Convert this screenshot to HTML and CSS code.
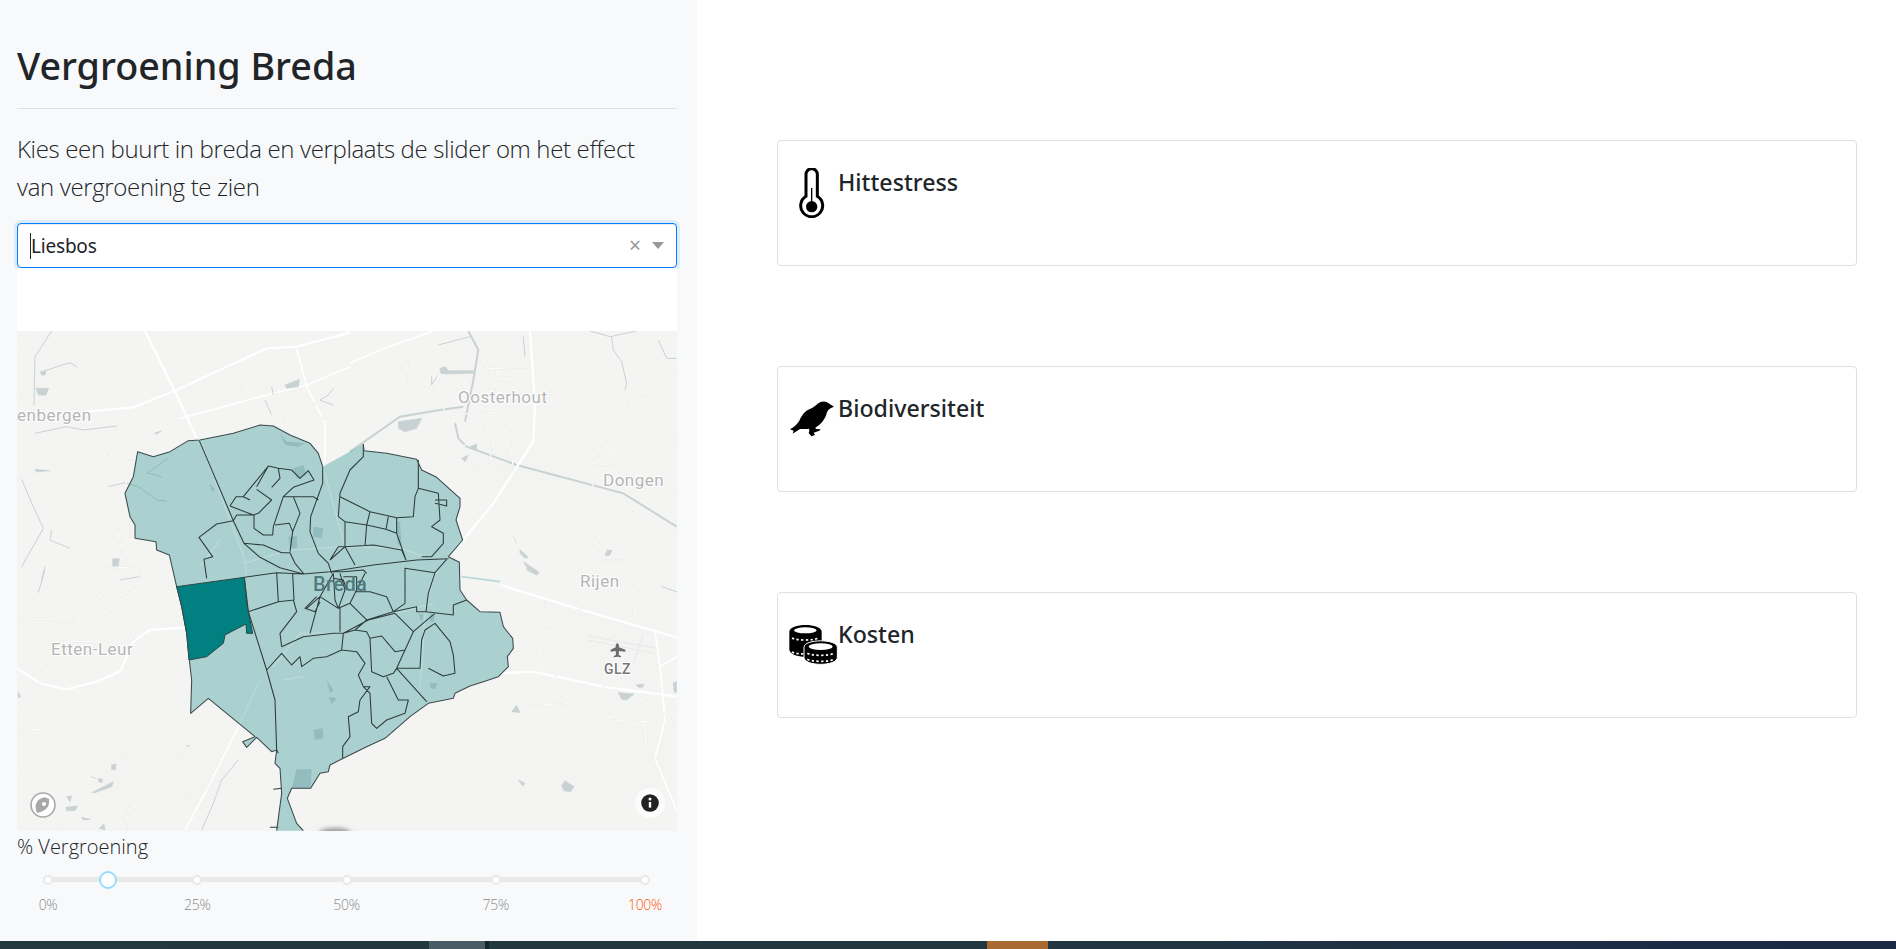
FILE: index.html

```html
<!DOCTYPE html>
<html lang="nl">
<head>
    <meta charset="UTF-8">
    <meta name="viewport" content="width=device-width, initial-scale=1.0">
    <title>Vergroening Breda</title>
    <link rel="stylesheet" href="styles.css">
</head>
<body>
    <div class="page">
        <aside class="sidebar">
            <h1>Vergroening Breda</h1>
            <hr class="divider">
            <p class="lead">Kies een buurt in breda en verplaats de slider om het effect van vergroening te zien</p>

            <div class="dropdown">
                <span class="caret"></span>
                <span class="dropdown-value">Liesbos</span>
                <span class="dropdown-clear">×</span>
                <span class="dropdown-arrow"></span>
            </div>
            <div class="map-top"></div>

            <svg class="map" viewBox="17 331 660 500" aria-label="Kaart van Breda">
                <defs>
                    <filter id="wobble" x="-5%" y="-5%" width="110%" height="110%">
                        <feTurbulence type="fractalNoise" baseFrequency="0.09" numOctaves="2" seed="4"/>
                        <feDisplacementMap in="SourceGraphic" scale="3"/>
                    </filter>
                </defs>
                <rect x="17" y="331" width="660" height="500" fill="#f4f4f3"/>

                <!-- land shading -->
                <g class="shade">
                    <ellipse cx="160" cy="770" rx="70" ry="45"/>
                    <ellipse cx="500" cy="770" rx="110" ry="40"/>
                    <ellipse cx="600" cy="760" rx="70" ry="40"/>
                    <ellipse cx="520" cy="470" rx="50" ry="20"/>
                </g>

                <!-- north west -->
                <g transform="translate(0 320) scale(.33333)">
                    <path class="road" d="M435,33 L525,215 L590,355"/>
                    <path class="road" d="M260,275 L400,262 L530,210 L800,85 L890,80 L1050,38"/>
                    <path class="road-mid" d="M540,295 L800,225 L920,195 L1050,140"/>
                    <path class="road-mid" d="M890,85 L920,200 L975,310 L975,430"/>
                    <path class="minor" d="M480,40 L490,100 L590,240 L690,195 L810,205 M52,100 L100,60 L120,33 M52,225 L90,240 L110,310 L200,400 L355,605 L365,720 L370,780"/>
                    <path class="minor" d="M200,485 L250,470 L290,410 L415,392 M185,490 L190,530 L255,575 L355,605 M52,480 L120,450 L175,460 M375,420 L405,420 M355,610 L390,605 L390,655 L405,655 M315,745 L420,740 L420,780 M905,255 L960,250 L970,300 M830,150 L815,180 L850,290 L855,315"/>
                    <path class="water" d="M155,33 L105,110 L102,255 M125,155 L210,128 L232,142 M325,500 L375,488 M440,460 L505,415 M445,460 L470,465 L485,472 M380,490 L415,500 L470,540 L500,543 M65,478 L100,560 L130,625 L65,740 M155,630 L150,660 L210,685 M135,740 L125,780 M105,340 L200,320 L250,330 L350,318 M815,200 L820,225 M795,240 L815,285 M1000,205 L985,225 L960,240 L1000,255"/>
                    <path class="pond" d="M108,205 L146,205 L138,225 L115,225 Z M338,716 L358,716 L355,738 L338,738 Z M855,195 L898,178 L896,200 L860,205 Z M122,155 L138,155 L135,165 L124,165 Z M105,448 L150,452 L110,456 Z M463,340 L485,332 L470,342 Z"/>
                    <rect class="minor" x="845" y="300" width="14" height="14" transform="rotate(10 852 307)"/>
                </g>

                <!-- north east -->
                <g transform="translate(350 320) scale(.33333)">
                    <path class="water-wide" d="M0,395 L150,290 L270,270 L340,260"/>
                    <path class="water-wide" d="M355,33 L385,90 L370,180 L345,305 M315,310 L325,355 L350,380 L500,435 L820,520 L980,620"/>
                    <path class="road" d="M295,705 L340,660 L430,550 L550,365 L555,250 L540,33"/>
                    <path class="road-mid" d="M0,130 L90,90 L250,33"/>
                    <path class="minor" d="M220,55 L260,110 L275,210 L285,295 L380,320 L470,335 L550,355 M220,55 L175,110 L170,185 L275,210 M285,295 L380,275 L475,280 L480,335 M380,320 L300,450 M415,145 L540,148 M405,100 L400,175 L380,275 M440,150 L430,275 M500,150 L480,260 M430,175 L490,175 M380,320 L425,340 L420,440 L375,500 M305,455 L360,430 L410,465 M420,435 L490,455 M480,340 L490,455 M305,455 L430,545 M590,260 L590,305 L650,300 L720,265 L870,240 L980,160 M590,305 L720,430 L850,440 L980,520 M760,380 L830,395 L750,380 L740,470 L710,540 L750,640 L740,720 L830,720 L830,780 M810,255 L830,390 M870,180 L980,165 M870,180 L880,260 L960,360 L980,360 M830,390 L870,340 L960,420 M840,420 L930,335 M490,455 L575,590 L650,770 M420,590 L470,660 L575,590 M430,770 L470,660 M710,540 L900,590 L980,640 M0,60 L70,70 L90,90"/>
                    <path class="water" d="M720,33 L780,50 L860,33 M785,50 L790,90 L815,125 L830,190 L825,210 M925,60 L950,115 L980,115 M265,75 L360,50 M520,50 L525,110 M245,170 L245,195 L260,170"/>
                    <path class="pond" d="M270,145 L285,140 L295,152 L370,152 L370,160 L285,162 L272,160 Z M145,305 L215,295 L200,325 L165,335 L145,325 Z M490,650 L500,670 M510,690 L535,712 L525,715 L510,700 Z M530,745 L568,760 L560,765 L530,750 Z M770,690 L785,692 L775,705 Z M335,415 L355,405 L345,425 Z M360,380 L380,372 L380,390 Z"/>
                </g>

                <!-- south west -->
                <g transform="translate(0 570) scale(.33333)">
                    <path class="road" d="M52,295 L120,340 L200,358 L290,335 L360,305 L400,215 L450,180 L560,172"/>
                    <path class="road-mid" d="M555,780 L620,660 L720,460 L780,330"/>
                    <path class="minor" d="M52,150 L105,158 L230,155 L300,72 L330,100 L360,70 L480,55 L530,72 M105,158 L125,320 L100,395 L70,415 L88,480 L175,468 L270,410 L305,365 L360,310 M360,310 L480,425 L560,590 L620,650 L700,730 L730,780 M305,365 L340,480 L385,585 L375,640 L385,715 L380,780 M385,715 L510,700 L580,685 L620,650 M230,155 L410,185 L360,70 M300,72 L330,190 M260,165 L280,215 M165,165 L190,215 M120,255 L200,215 L280,215 L410,185 M230,155 L360,110 L525,72 M52,605 L80,590 L110,630 L115,680 L185,780 M52,490 L175,468"/>
                    <path class="water" d="M135,0 L115,68 M360,30 L418,20 M715,570 L665,630 L640,700 L605,780"/>
                    <path class="pond" d="M55,365 L62,382 L54,382 Z M335,585 L348,582 L346,600 L335,598 Z M272,620 L290,625 M295,625 L308,628 L305,638 L297,636 Z M275,668 L340,635 L335,650 L285,668 Z M200,680 L215,678 L210,695 Z M198,712 L233,708 L225,722 L200,722 Z M245,742 L272,748 L250,750 Z M298,775 L312,762 L315,780 Z M560,528 L585,525 L565,532 Z"/>
                    <path class="shade" d="M555,540 L600,500 L640,520 L610,595 L570,580 Z M270,135 L300,125 L300,155 L275,155 Z"/>
                </g>

                <!-- south east -->
                <g transform="translate(500 550) scale(.33333)">
                    <path class="shade" d="M175,225 L215,185 L340,205 L470,250 L475,385 L400,400 L300,360 L240,300 Z"/>
                    <path class="road" d="M0,105 L240,178 L530,262"/>
                    <path class="road" d="M0,370 L100,365 L310,410 L530,440"/>
                    <path class="road-mid" d="M465,245 L480,350 L490,450 L495,510 L465,625 L530,780 M480,350 L530,320"/>
                    <path class="runway" d="M265,258 L470,295 M265,270 L460,310 M430,250 L400,340"/>
                    <path class="minor" d="M165,0 L245,175 M135,150 L135,180 L100,240 L120,310 L175,390 L195,462 M100,240 L165,236 L210,185 L245,178 M30,300 L120,310 L260,335 L305,385 L315,420 L330,510 L290,525 L30,755 L0,815 M0,425 L100,465 L195,462 L320,440 M330,510 L440,515 L490,490 L530,480 M420,440 L430,510 L440,520 L440,600 L465,625 M510,480 L515,525 L530,525 M250,40 L285,30 L295,0 M285,125 L400,150 L395,100 L365,0 M320,135 L340,205 M400,150 L400,218 M280,100 L285,125 M250,40 L250,80"/>
                    <path class="water" d="M485,110 L530,125"/>
                    <path class="pond" d="M60,0 L82,20 L72,22 Z M70,35 L115,65 L105,72 L80,52 Z M315,10 L335,0 L330,15 L318,18 Z M55,690 L75,700 L68,708 Z M185,708 L195,692 L222,710 L212,725 L192,722 Z M355,428 L402,432 L380,450 L365,448 Z M408,405 L432,402 L428,412 L415,412 Z M520,398 L530,395 L530,428 L522,425 Z M35,485 L50,465 L60,488 Z"/>
                    <path class="plane" d="M352,280 C356,280 357,286 357,292 L376,299 L376,305 L357,303 L356,314 L363,319 L363,322 L352,320 L341,322 L341,319 L348,314 L347,303 L332,305 L332,299 L347,292 C347,286 348,280 352,280 Z"/>
                </g>

                <g class="labels">
                    <text class="map-label" x="458" y="403">Oosterhout</text>
                    <text class="map-label" x="17" y="421">enbergen</text>
                    <text class="map-label" x="603" y="486">Dongen</text>
                    <text class="map-label" x="580" y="587">Rijen</text>
                    <text class="map-label" x="51" y="655">Etten-Leur</text>
                    <text class="map-label map-label-dark" x="604" y="674">GLZ</text>
                </g>

                <!-- Breda wijken -->
                <g transform="translate(100 400) scale(.33333)">
                    <path class="city" d="M300,120 L400,100 L480,75 L520,78 L570,105 L630,130 L655,160 L668,200 L790,132 L792,152 L860,160 L950,178 L965,210 L1010,232 L1080,295 L1080,320 L1068,360 L1088,420 L1045,470 L1078,487 L1080,570 L1100,600 L1140,635 L1200,637 L1210,680 L1238,715 L1240,745 L1222,770 L1225,800 L1195,830 L1150,845 L1110,858 L1065,880 L1060,895 L985,910 L930,950 L855,1015 L800,1040 L730,1075 L690,1095 L685,1115 L660,1120 L632,1165 L575,1165 L562,1195 L590,1270 L610,1292 L530,1292 L545,1180 L540,1105 L525,1090 L530,1050 L515,1055 L470,1012 L440,1042 L428,1025 L465,1010 L325,895 L272,940 L275,840 L268,780 L260,700 L245,620 L230,560 L208,465 L170,450 L168,425 L105,415 L105,375 L90,350 L75,280 L100,230 L113,155 L160,170 L210,155 L265,122 Z"/>
                    <path class="city-detail" d="M300,120 L435,480 L440,530 M670,205 L735,440 M1045,470 L1000,530 L975,640 L965,800 L960,860 M520,800 L600,700 L730,700 M885,640 L1000,610 M430,490 L570,450 L735,440 L900,445 L975,470 M1085,530 L1200,545 M550,840 L610,830 M300,500 L360,420"/>
                    <path class="city-pond" d="M580,205 L610,195 L620,225 L590,235 Z M565,410 L590,408 L592,445 L570,445 Z M890,365 L900,365 L905,440 L892,430 Z M640,990 L668,985 L670,1015 L645,1020 Z M590,1108 L635,1108 L632,1165 L575,1165 Z M990,850 L1012,850 L1005,868 L992,865 Z M685,890 L710,895 L695,912 Z M680,840 L700,870 L690,880 Z M955,640 L970,645 L965,665 Z M990,640 L1005,645 L1000,665 L990,665 Z M330,250 L345,270 L335,275 Z M640,380 L670,385 L665,415 L640,410 Z M540,100 L560,125 L615,130 L595,140 L555,135 Z"/>

                    <path class="bounds" d="M298,122 L400,362 L432,430 L480,472 L540,503 L610,522 L690,515 L820,495 L950,480 L1045,476
                        M433,532 L530,518 L610,522
                        M433,532 L445,635 L500,810 L525,900 L530,1050 L535,1060
                        M668,200 L668,250 L632,350 L630,395 L655,460 L685,490 L695,520
                        M400,362 L350,372 L297,412 L338,470 L312,478 L320,535
                        M432,430 L490,435 L545,458 L570,458 L585,490 L612,522
                        M390,318 L408,290 L430,290 L505,198 L535,205 L575,210 L600,235 L625,212 L642,240 L580,262 L550,290 L640,290 L655,300
                        M470,268 L515,300 L475,340 L460,345 L390,318
                        M430,290 L450,300 M550,290 L520,380 L518,405 L490,405 L462,385 L462,345
                        M580,290 L600,340 L578,395 L568,370 L525,375
                        M578,395 L570,455
                        M400,362 L410,345 L462,345
                        M505,198 L470,260 M535,205 L540,235 L515,262
                        M790,132 L790,170 L750,210 L720,280 L715,350 L735,365 L735,440 L690,480
                        M720,290 L810,335 L890,353 L940,350 L945,290 L955,265 L955,180
                        M810,335 L800,375 L735,365 M865,350 L858,388 L800,375 L795,438 M858,388 L890,400 L890,353 M890,400 L918,480
                        M955,265 L1015,280 L1020,360 L995,380 L1030,400 L1030,430 L995,470 L965,470
                        M1005,300 L1040,300 L1040,318 L1005,310
                        M735,440 L820,435 L905,450 L918,480
                        M690,480 L715,440 L735,440 M735,440 L765,495
                        M530,518 L535,605 L445,635 M535,605 L582,600 L578,522 M580,600 L590,635 L540,700 L545,740
                        M620,625 L660,590 L700,520 M660,590 L630,700 M660,590 L715,625 L750,610 L795,520
                        M700,520 L705,600 L715,625 M720,520 L735,570 L715,625
                        M695,515 L730,515 L790,510 L800,520 M700,535 L730,540 L740,570 M730,530 L770,530 L770,575 M650,590 L615,625 L645,635 L660,605
                        M750,610 L800,660 L880,635 L860,590 L810,575 L765,575
                        M880,635 L915,610 L915,505 L1005,518 L1040,478
                        M1005,518 L985,580 L978,635 L1060,645 L1060,615 L1100,600
                        M880,635 L950,620 L950,635 L978,635 M1005,640 L975,665 L940,695 L885,640 L805,660 L730,700 L700,700 L610,710 L545,740
                        M720,620 L720,695 M800,660 L765,690 L730,700
                        M940,695 L915,750 L885,755 L845,708 L810,715 L800,695 L765,690
                        M730,700 L725,750 L770,755 L795,790 L775,825 L790,860 L810,860 L780,900 L775,935 L745,950 L750,1010 L728,1040 L728,1075
                        M725,750 L680,770 L640,775 L605,800 L600,770 L575,795 L545,760 L500,810
                        M810,715 L815,815 L850,830 L880,820 L890,805 L960,805 L965,720 L975,690 L1005,670 L1050,725 L1060,765 L1065,820 L1030,828 L985,805
                        M890,805 L915,750 M890,805 L980,905
                        M860,830 L895,900 L925,900 L915,940 L860,960 L830,985 L815,970 L810,880 L790,860
                        M520,1168 L545,1165 M510,1282 L535,1282"/>
                    <path class="outline" d="M300,120 L400,100 L480,75 L520,78 L570,105 L630,130 L655,160 L668,200 M790,132 L792,152 L860,160 L950,178 L965,210 L1010,232 L1080,295 L1080,320 L1068,360 L1088,420 L1045,470 L1078,487 L1080,570 L1100,600 L1140,635 L1200,637 L1210,680 L1238,715 L1240,745 L1222,770 L1225,800 L1195,830 L1150,845 L1110,858 L1065,880 L1060,895 L985,910 L930,950 L855,1015 L800,1040 L730,1075 L690,1095 L685,1115 L660,1120 L632,1165 L575,1165 L562,1195 L590,1270 L610,1292 M530,1292 L545,1180 L540,1105 L525,1090 L530,1050 L515,1055 L470,1012 L440,1042 L428,1025 L465,1010 L325,895 L272,940 L275,840 L268,780 L260,700 L245,620 L230,560 L208,465 L170,450 L168,425 L105,415 L105,375 L90,350 L75,280 L100,230 L113,155 L160,170 L210,155 L265,122 L300,120"/>
                    <path class="selected" d="M230,560 L433,532 L440,610 L458,700 L440,700 L438,672 L375,705 L370,730 L320,770 L267,780 L260,700 L245,620 Z"/>
                </g>

                <text class="map-label-city" x="313" y="591">Breda</text>

                <ellipse class="map-smudge" cx="335" cy="833" rx="16" ry="5"/>

                <!-- compass + info -->
                <g class="compass">
                    <circle cx="43" cy="805" r="12"/>
                    <path d="M49,799 C50,807 46,811 37,813 C34,806 36,800 42,798 C45,797 47,798 49,799 Z"/>
                    <circle class="compass-dot" cx="44" cy="804" r="2"/>
                </g>
                <circle cx="650" cy="803" r="15" fill="#fff" opacity=".75"/>
                <circle cx="650" cy="803" r="8.8" fill="#222"/>
                <rect x="648.8" y="802" width="2.4" height="5.6" fill="#fff"/>
                <circle cx="650" cy="799" r="1.5" fill="#fff"/>
            </svg>

            <label class="slider-label">% Vergroening</label>
            <div class="slider">
                <div class="rail"></div>
                <div class="marks">
                    <div class="mark"><span class="dot"></span><span class="mark-text">0%</span></div>
                    <div class="mark"><span class="dot"></span><span class="mark-text">25%</span></div>
                    <div class="mark"><span class="dot"></span><span class="mark-text">50%</span></div>
                    <div class="mark"><span class="dot"></span><span class="mark-text">75%</span></div>
                    <div class="mark"><span class="dot"></span><span class="mark-text mark-max">100%</span></div>
                </div>
                <div class="handle" style="left: 10%"></div>
            </div>
        </aside>

        <main class="content">
            <section class="card">
                <svg class="card-icon" viewBox="54 114 150 150">
                    <path d="M108,133 A17,17 0 0 1 142,133 L142,199 A33,33 0 1 1 108,199 Z" fill="none" stroke="#000" stroke-width="9"/>
                    <circle cx="125" cy="230" r="17"/>
                    <rect x="123" y="174" width="4" height="50"/>
                </svg>
                <h4>Hittestress</h4>
            </section>
            <section class="card">
                <svg class="card-icon" viewBox="54 102 150 150">
                    <path d="M192,140 L180,133 C172,124 160,122 150,127 C140,132 133,143 120,147 C105,152 96,165 88,182 C82,193 70,202 60,208 L71,212 L68,221 L90,207 C100,207 110,208 117,206 L118,213 L116,219 L124,229 L135,225 L131,218 L148,212 L152,208 L138,207 L136,203 C150,196 165,180 170,160 C172,152 176,146 192,140 Z"/>
                </svg>
                <h4>Biodiversiteit</h4>
            </section>
            <section class="card">
                <svg class="card-icon" viewBox="54 90 150 150">
                    <g class="coin">
                        <path d="M58,125 C58,98 155,98 155,125 L155,178 C155,208 58,208 58,178 Z"/>
                        <ellipse class="coin-top" cx="106" cy="121" rx="34" ry="9"/>
                        <path class="coin-edge" d="M66,144 C80,152 130,152 146,144"/>
                        <path class="coin-edge" d="M66,186 C80,194 130,194 146,186"/>
                    </g>
                    <g class="coin">
                        <path d="M102,172 C102,146 202,146 202,172 L202,202 C202,230 102,230 102,202 Z" stroke="#fff" stroke-width="3"/>
                        <ellipse class="coin-top" cx="152" cy="170" rx="36" ry="10"/>
                        <path class="coin-edge" d="M112,190 C128,198 176,198 192,190"/>
                        <path class="coin-edge" d="M112,208 C128,216 176,216 192,208"/>
                    </g>
                </svg>
                <h4>Kosten</h4>
            </section>
        </main>
    </div>
    <div class="taskbar">
        <span class="task task-active"></span>
        <span class="task-sep"></span>
        <span class="task task-orange"></span>
    </div>
</body>
</html>
```

FILE: styles.css

```css
* {
    box-sizing: border-box;
}

body {
    margin: 0;
    height: 100vh;
    display: flex;
    flex-direction: column;
    overflow: hidden;
    font-family: "Noto Sans", "Open Sans", sans-serif;
    color: #212529;
    background-color: #fff;
}

.page {
    flex: 1;
    display: flex;
    min-height: 0;
}

.sidebar {
    width: 697px;
    padding: 0 20px 0 17px;
    background-color: #f8f9fa;
}

h1 {
    margin: 42px 0 0;
    font-size: 37.7px;
    line-height: 48px;
    font-weight: 500;
}

.divider {
    margin: 18px 0 0;
    border: 0;
    border-top: 1px solid #dee2e6;
}

.lead {
    margin: 21px 0 0;
    font-size: 24px;
    line-height: 37.5px;
    font-weight: 300;
    font-family: "Open Sans", sans-serif;
    letter-spacing: -0.35px;
}

.dropdown {
    display: flex;
    align-items: center;
    height: 45px;
    margin-top: 18px;
    padding: 0 12px;
    background-color: #fff;
    border: 1px solid #007eff;
    border-radius: 4px;
    box-shadow: inset 0 1px 1px rgba(0, 0, 0, 0.075), 0 0 0 3px rgba(0, 126, 255, 0.1);
}

.caret {
    width: 1px;
    height: 26px;
    background-color: #222;
}

.dropdown-value {
    flex: 1;
    font-size: 19px;
    letter-spacing: -0.2px;
}

.dropdown-clear {
    margin-right: 11px;
    font-size: 21px;
    line-height: 1;
    color: #999;
}

.dropdown-arrow {
    width: 0;
    height: 0;
    border-left: 6.5px solid transparent;
    border-right: 6.5px solid transparent;
    border-top: 7px solid #999;
}

.map-top {
    height: 63px;
    background-color: #fff;
}

.map {
    display: block;
    width: 660px;
    height: 500px;
}

.road {
    fill: none;
    stroke: #fff;
    stroke-width: 7;
}

.road-mid {
    fill: none;
    stroke: #fff;
    stroke-width: 5;
}

.minor {
    fill: none;
    stroke: #fbfbfa;
    stroke-width: 3.5;
    filter: drop-shadow(0 0 1px #d4d5d4);
}

.water {
    fill: none;
    stroke: #c9d2d3;
    stroke-width: 3;
}

.water-wide {
    fill: none;
    stroke: #c9d2d3;
    stroke-width: 6;
}

.pond {
    fill: #c9d2d3;
    stroke: #c9d2d3;
    stroke-width: 2;
}

.shade {
    fill: #f3f3f2;
}

.runway {
    fill: none;
    stroke: #e6e8e7;
    stroke-width: 3;
}

.plane {
    fill: #6b6b6b;
}

.map-label {
    font-family: Roboto, sans-serif;
    font-size: 17px;
    letter-spacing: 0.5px;
    fill: #b4b4b4;
    stroke: #fff;
    stroke-width: 2px;
    paint-order: stroke;
}

.map-label-dark {
    font-size: 14px;
    font-weight: 500;
    fill: #777;
}

.map-label-city {
    font-family: Roboto, sans-serif;
    font-size: 20px;
    font-weight: 500;
    letter-spacing: 0.4px;
    fill: #4f7a7d;
}

.city {
    fill: #008080;
    fill-opacity: 0.3;
}

.city-detail {
    fill: none;
    stroke: #b9d9d8;
    stroke-width: 5;
}

.city-pond {
    fill: #92bcbd;
}

.bounds {
    fill: none;
    stroke: #2f3b3d;
    stroke-width: 3.2;
    stroke-linejoin: round;
    filter: url(#wobble);
}

.outline {
    fill: none;
    stroke: #3d4a4c;
    stroke-width: 3.2;
    stroke-linejoin: round;
    filter: url(#wobble);
}

.selected {
    fill: #008080;
    stroke: #344;
    stroke-width: 3;
}

.map-smudge {
    fill: #999;
    filter: blur(2px);
}

.compass circle {
    fill: #fff;
    stroke: #a8a8a8;
    stroke-width: 1.6;
}

.compass path {
    fill: #a8a8a8;
}

.compass .compass-dot {
    fill: #fff;
    stroke: none;
}

.slider-label {
    display: block;
    margin-top: 2px;
    font-size: 20px;
    line-height: 27px;
    font-weight: 300;
    font-family: "Open Sans", sans-serif;
}

.slider {
    position: relative;
    margin: 17px 32px 0 31px;
}

.rail {
    position: absolute;
    top: 0;
    left: 0;
    right: 0;
    height: 5px;
    background-color: #e9e9e9;
}

.marks {
    display: flex;
    justify-content: space-between;
}

.mark {
    width: 0;
    display: flex;
    flex-direction: column;
    align-items: center;
}

.dot {
    flex: none;
    position: relative;
    width: 10px;
    height: 10px;
    margin-top: -2.5px;
    background-color: #fff;
    border: 2px solid #e9e9e9;
    border-radius: 50%;
}

.mark-text {
    margin-top: 10px;
    font-size: 14px;
    line-height: 20px;
    font-weight: 300;
    font-family: "Open Sans", sans-serif;
    color: #8c8c8c;
    letter-spacing: -0.3px;
}

.mark-max {
    color: #f50;
}

.handle {
    position: absolute;
    top: -6px;
    width: 18px;
    height: 18px;
    margin-left: -9px;
    background-color: #fff;
    border: 2px solid #96dbfa;
    border-radius: 50%;
}

.content {
    flex: 1;
    display: flex;
    flex-direction: column;
    gap: 100px;
    padding: 140px 39px 0 80px;
}

.card {
    display: flex;
    align-items: flex-start;
    height: 126px;
    padding: 27px 10px 0;
    background-color: #fff;
    border: 1px solid #dfdfdf;
    border-radius: 4px;
}

.card-icon {
    flex: none;
    width: 50px;
    height: 50px;
}

h4 {
    margin: 0;
    font-size: 23.2px;
    line-height: 29px;
    font-weight: 500;
}

.coin-top {
    fill: #fff;
}

.coin-edge {
    fill: none;
    stroke: #fff;
    stroke-width: 5;
    stroke-dasharray: 7 7;
}

.taskbar {
    flex: none;
    display: flex;
    height: 8px;
    background: linear-gradient(90deg, #22393f 0%, #22383f 50%, #1f3044 75%, #1a2745 100%);
}

.task {
    height: 100%;
}

.task-active {
    width: 56px;
    margin-left: 429px;
    background-color: #4a5d66;
}

.task-sep {
    width: 4px;
    background-color: #15262b;
}

.task-orange {
    width: 61px;
    margin-left: 498px;
    background-color: #a86a30;
}
```
